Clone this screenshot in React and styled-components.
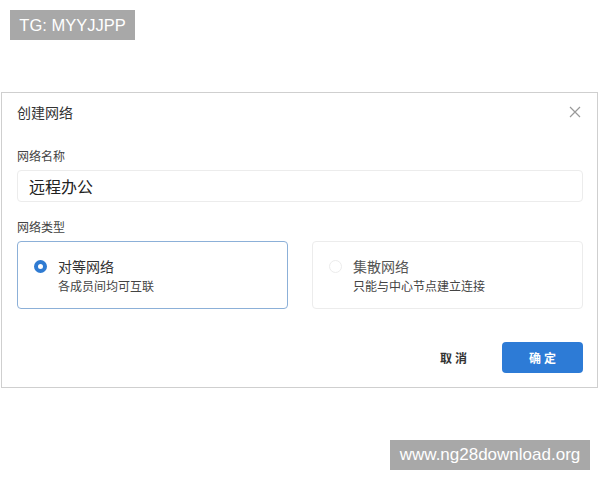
import styled, { createGlobalStyle } from "styled-components";

const GlobalStyle = createGlobalStyle`
  body {
    margin: 0;
    background: #fff;
    font-family: "Noto Sans CJK SC", "Liberation Sans", sans-serif;
  }
`;

const Page = styled.div`
  width: 600px;
  height: 480px;
  display: flex;
  flex-direction: column;
`;

const Tag = styled.div`
  align-self: flex-start;
  margin: 10px 0 0 10px;
  width: 125px;
  height: 30px;
  display: flex;
  align-items: center;
  justify-content: center;
  background: #a8a8a8;
  color: #fff;
  font-family: "Liberation Sans", Arial, sans-serif;
  font-size: 16.5px;
`;

const Dialog = styled.div`
  margin: 52px 2px 0 1px;
  border: 1px solid #cfcfcf;
  padding: 0 14px 0 15px;
  height: 296px;
  box-sizing: border-box;
  display: flex;
  flex-direction: column;
`;

const Header = styled.div`
  height: 38px;
  display: flex;
  align-items: center;
  justify-content: space-between;
`;

const Title = styled.div`
  font-size: 14px;
  color: #333;
`;

const Close = styled.button`
  border: none;
  background: none;
  padding: 0;
  margin-right: 2px;
  width: 12px;
  height: 12px;
  display: flex;
  cursor: pointer;
`;

const Label = styled.div`
  font-size: 12px;
  line-height: 17px;
  color: #444;
  margin-top: ${(p) => p.$top}px;
`;

const Input = styled.input`
  margin-top: 6px;
  height: 32px;
  box-sizing: border-box;
  border: 1px solid #ececec;
  border-radius: 4px;
  padding: 0 11px;
  font-family: inherit;
  font-size: 16px;
  color: #222;
  outline: none;
`;

const Options = styled.div`
  margin-top: 6px;
  display: grid;
  grid-template-columns: 1fr 1fr;
  gap: 24px;
`;

const Card = styled.div`
  height: 68px;
  box-sizing: border-box;
  border: 1px solid ${(p) => (p.$active ? "#8cb0d8" : "#ececec")};
  border-radius: 4px;
  padding: 14px 16px;
  display: flex;
  gap: 11px;
`;

const Radio = styled.span`
  margin-top: 3.5px;
  width: 13px;
  height: 13px;
  border-radius: 50%;
  box-sizing: border-box;
  flex-shrink: 0;
  background: #fff;
  border: ${(p) => (p.$checked ? "4px solid #2f7bd2" : "1px solid #ececec")};
`;

const CardText = styled.div`
  display: flex;
  flex-direction: column;
`;

const CardTitle = styled.div`
  font-size: 14px;
  line-height: 20px;
  color: ${(p) => (p.$muted ? "#555" : "#333")};
`;

const CardDesc = styled.div`
  font-size: 12px;
  line-height: 20px;
  color: #444;
`;

const Footer = styled.div`
  margin-top: 33px;
  display: flex;
  justify-content: flex-end;
  align-items: center;
  gap: 32px;
`;

const Button = styled.button`
  height: 31px;
  width: ${(p) => (p.$primary ? "81px" : "auto")};
  border: none;
  border-radius: 4px;
  padding: 0;
  background: ${(p) => (p.$primary ? "#2d7bd6" : "transparent")};
  color: ${(p) => (p.$primary ? "#fff" : "#333")};
  font-family: inherit;
  font-size: 12px;
  font-weight: 700;
  letter-spacing: 3px;
  text-indent: 3px;
  cursor: pointer;
`;

const Watermark = styled.div`
  align-self: flex-end;
  margin: 52px 10px 0 0;
  width: 200px;
  height: 30px;
  display: flex;
  align-items: center;
  justify-content: center;
  background: #a8a8a8;
  color: #fff;
  font-family: "Liberation Sans", Arial, sans-serif;
  font-size: 17px;
`;

export default function App() {
  return (
    <Page>
      <GlobalStyle />
      <Tag>TG: MYYJJPP</Tag>
      <Dialog>
        <Header>
          <Title>创建网络</Title>
          <Close aria-label="关闭">
            <svg width="12" height="12" viewBox="0 0 12 12">
              <path d="M1 1L11 11M11 1L1 11" stroke="#999" strokeWidth="1.2" fill="none" />
            </svg>
          </Close>
        </Header>
        <Label $top={16}>网络名称</Label>
        <Input defaultValue="远程办公" />
        <Label $top={16}>网络类型</Label>
        <Options>
          <Card $active>
            <Radio $checked />
            <CardText>
              <CardTitle>对等网络</CardTitle>
              <CardDesc>各成员间均可互联</CardDesc>
            </CardText>
          </Card>
          <Card>
            <Radio />
            <CardText>
              <CardTitle $muted>集散网络</CardTitle>
              <CardDesc>只能与中心节点建立连接</CardDesc>
            </CardText>
          </Card>
        </Options>
        <Footer>
          <Button>取消</Button>
          <Button $primary>确定</Button>
        </Footer>
      </Dialog>
      <Watermark>www.ng28download.org</Watermark>
    </Page>
  );
}
